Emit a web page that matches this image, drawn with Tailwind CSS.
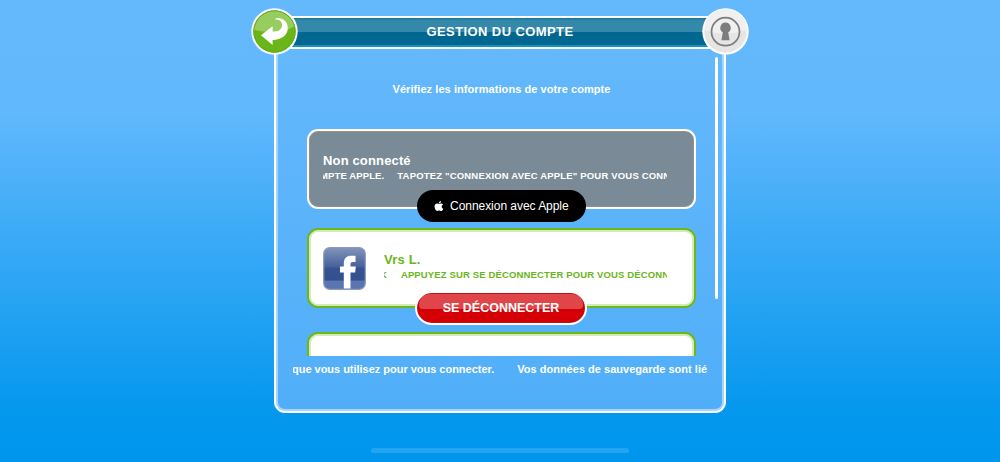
<!DOCTYPE html>
<html lang="fr">
<head>
  <meta charset="UTF-8" />
  <title>Gestion du compte</title>
  <script src="https://cdn.jsdelivr.net/npm/@tailwindcss/browser@4"></script>
</head>
<body class="h-[462px] overflow-hidden bg-[linear-gradient(180deg,#64b8fc_0%,#62b8fc_24%,#0397ee_90%,#0096ee_100%)] font-['Liberation_Sans',sans-serif] font-bold text-white flex flex-col items-center">

  <div class="relative mt-[16px] w-[452px] h-[397px] shrink-0">

    <!-- header -->
    <div class="relative z-10 h-[33px] border-y-2 border-white bg-[#1592bf] pb-[2px] flex flex-col">
      <div class="flex-1 bg-[linear-gradient(180deg,#16799f_0%,#3488aa_10%,#3488aa_50%,#016791_52%,#016791_100%)] flex items-center justify-center">
        <h1 id="title" class="text-[13px] leading-none whitespace-nowrap tracking-[0.4px]">GESTION DU COMPTE</h1>
      </div>
    </div>

    <!-- back -->
    <button class="absolute z-20 left-[-23px] top-[-8px] w-[47px] h-[47px]">
      <svg viewBox="0 0 47 47" class="w-full h-full">
        <defs>
          <clipPath id="disc"><circle cx="23.5" cy="23.5" r="21" /></clipPath>
        </defs>
        <circle cx="23.5" cy="23.5" r="23.2" fill="#fff" />
        <circle cx="23.5" cy="23.5" r="21.2" fill="#6ab61a" />
        <path d="M3 0H44V18Q34 24 23 24T3 22Z" fill="#fff" opacity=".3" clip-path="url(#disc)" />
        <circle cx="23.5" cy="23.5" r="20.7" fill="none" stroke="#5fae10" stroke-width="1" />
        <path d="M10 27.3L21.6 18.2V23.4C28.5 23.8 31.6 20.4 31 16.2C30.4 12.8 27.6 11.4 24 11.4C24.8 10.2 26.8 9.8 28.8 10.2C33.8 11 36.8 15 36.8 20C36.8 27 31 31.6 21.6 32V37Z" fill="#fff" />
      </svg>
    </button>

    <!-- lock -->
    <button class="absolute z-20 right-[-23px] top-[-8px] w-[47px] h-[47px]">
      <svg viewBox="0 0 47 47" class="w-full h-full">
        <circle cx="23.5" cy="23.5" r="23.2" fill="#fff" />
        <circle cx="23.5" cy="23.5" r="21.2" fill="#e5e5e5" />
        <path d="M2.3 22A21.2 21.2 0 0 1 44.7 22Q34 25.5 23.5 25.5T2.3 22Z" fill="#f0f0f0" />
        <circle cx="23.5" cy="23.7" r="14" fill="none" stroke="#7d7d7d" stroke-width="1.7" />
        <path d="M23.5 14.6A5.3 5.3 0 0 1 26.2 24.4L27.6 32.3H19.4L20.8 24.4A5.3 5.3 0 0 1 23.5 14.6Z" fill="#7d7d7d" />
      </svg>
    </button>

    <!-- panel -->
    <div class="relative h-[364px] rounded-b-[11px] border-2 border-t-0 border-white bg-linear-to-b from-[#64b8fc] to-[#50aef8] shadow-[inset_2px_0_0_#a4d5fd,inset_-2px_0_0_#a4d5fd,inset_0_-2px_0_#a4d5fd] px-[17px]">

      <div class="absolute right-[6px] top-[8px] w-[3px] h-[242px] rounded-full bg-white"></div>

      <div class="h-[307px] overflow-hidden pl-[14px] pr-[11px]">
        <p class="pt-[34px] text-center text-[11px] leading-[13px] whitespace-nowrap"><span id="intro" class="tracking-[0.07px]">Vérifiez les informations de votre compte</span></p>

        <div class="relative mt-[32.5px] h-[80px] rounded-[11px] border-2 border-white bg-[#7a8b97] shadow-[inset_0_0_0_1px_#948f8b] pt-[22px] px-[14px]">
          <p class="text-[13px] leading-[16px]"><span id="name1" class="tracking-[0.15px]">Non connecté</span></p>
          <div class="w-[344px] overflow-hidden whitespace-nowrap text-[9.5px] leading-[14px]">
            <div class="flex w-max ml-[-3px] gap-[13px]"><span id="m1" class="tracking-[0.12px]">MPTE APPLE.</span><span id="m2" class="tracking-[0.18px]">TAPOTEZ "CONNEXION AVEC APPLE" POUR VOUS CONNECTER</span></div>
          </div>
          <button class="absolute left-[108px] top-[59.5px] w-[169px] h-[32px] rounded-full bg-black flex items-center pl-[17px] gap-[6px] font-normal text-[12px]">
            <svg viewBox="0 0 24 24" class="w-[10px] h-[10px] -mt-px" fill="#fff">
              <path d="M16.8 0C17 3.2 14.5 5.8 11.8 5.8C11.5 2.9 14 .3 16.8 0ZM21.8 8.2C16.8 11.2 18 17 22.5 18.5C21 22 19 24 17 24C15 24 14.5 22.9 12.3 22.9C10 22.9 9.5 24 7.6 24C4.5 24 1.2 18.5 1.2 13.4C1.2 8.8 4.2 6.2 7.4 6.2C9.5 6.2 11 7.4 12.3 7.4C13.5 7.4 15 6.1 17.5 6.1C19 6.1 20.8 6.8 21.8 8.2Z" />
            </svg>
            <span id="apple" class="whitespace-nowrap tracking-[-0.04px]">Connexion avec Apple</span>
          </button>
        </div>

        <div class="relative mt-[19.5px] h-[80px] rounded-[11px] border-2 border-[#6cb71c] bg-white shadow-[inset_0_0_0_2px_#d4eab9] px-[14px] flex">
          <svg viewBox="0 0 43 43" class="mt-[17px] w-[43px] h-[43px] shrink-0">
            <defs>
              <linearGradient id="fb" x1="0" y1="0" x2="0" y2="1">
                <stop offset="0" stop-color="#8294bb" />
                <stop offset=".45" stop-color="#48629c" />
                <stop offset=".5" stop-color="#355391" />
                <stop offset=".78" stop-color="#34508e" />
                <stop offset=".8" stop-color="#5a75b0" />
                <stop offset="1" stop-color="#5a75b0" />
              </linearGradient>
            </defs>
            <rect x=".7" y=".7" width="41.6" height="41.6" rx="6" fill="url(#fb)" stroke="#8c9ab8" stroke-width="1.2" />
            <path d="M20.8 41.5V25.5H17V19.5H20.8V16.5C20.8 11.3 23.8 8.8 28 8.8H32.5V15H29.8C28 15 27.5 15.7 27.5 17.2V19.5H32.8L32.2 25.5H27.5V41.5Z" fill="#fff" />
          </svg>
          <div class="ml-[18px] mt-[22px] text-[#6ab61a]">
            <p class="text-[13px] leading-[15px]"><span id="name2" class="tracking-[0.2px]">Vrs L.</span></p>
            <div class="w-[283px] mt-px overflow-hidden whitespace-nowrap text-[9.5px] leading-[14px]">
              <div class="flex w-max ml-[-4px] gap-[14px]"><span>K</span><span id="m3" class="tracking-[0.14px]">APPUYEZ SUR SE DÉCONNECTER POUR VOUS DÉCONNECTER</span></div>
            </div>
          </div>
          <button class="absolute left-[106px] top-[61px] w-[172px] h-[34px] rounded-full border-2 border-white bg-[#d40006] shadow-[inset_0_0_0_1px_#b9141c]">
            <div class="absolute inset-x-[2px] top-px h-[15px] rounded-t-[14px] rounded-b-[5px] bg-white/27"></div>
            <span id="logout" class="relative block text-[12.5px] leading-[29px] whitespace-nowrap">SE DÉCONNECTER</span>
          </button>
        </div>

        <div class="mt-[24px] h-[80px] rounded-[11px] border-2 border-[#6cb71c] bg-white shadow-[inset_0_0_0_2px_#d4eab9]"></div>
      </div>

      <div class="mt-[6px] w-[414px] overflow-hidden whitespace-nowrap text-[11px] leading-[15px]">
        <div class="flex w-max ml-[-1px] gap-[23px]"><span id="f1" class="tracking-[-0.02px]">que vous utilisez pour vous connecter.</span><span id="f2" class="tracking-[0.02px]">Vos données de sauvegarde sont liées</span></div>
      </div>
    </div>
  </div>

  <div class="mt-[35px] w-[258px] h-[5px] shrink-0 rounded-full bg-[#22a5f1]"></div>

</body>
</html>
